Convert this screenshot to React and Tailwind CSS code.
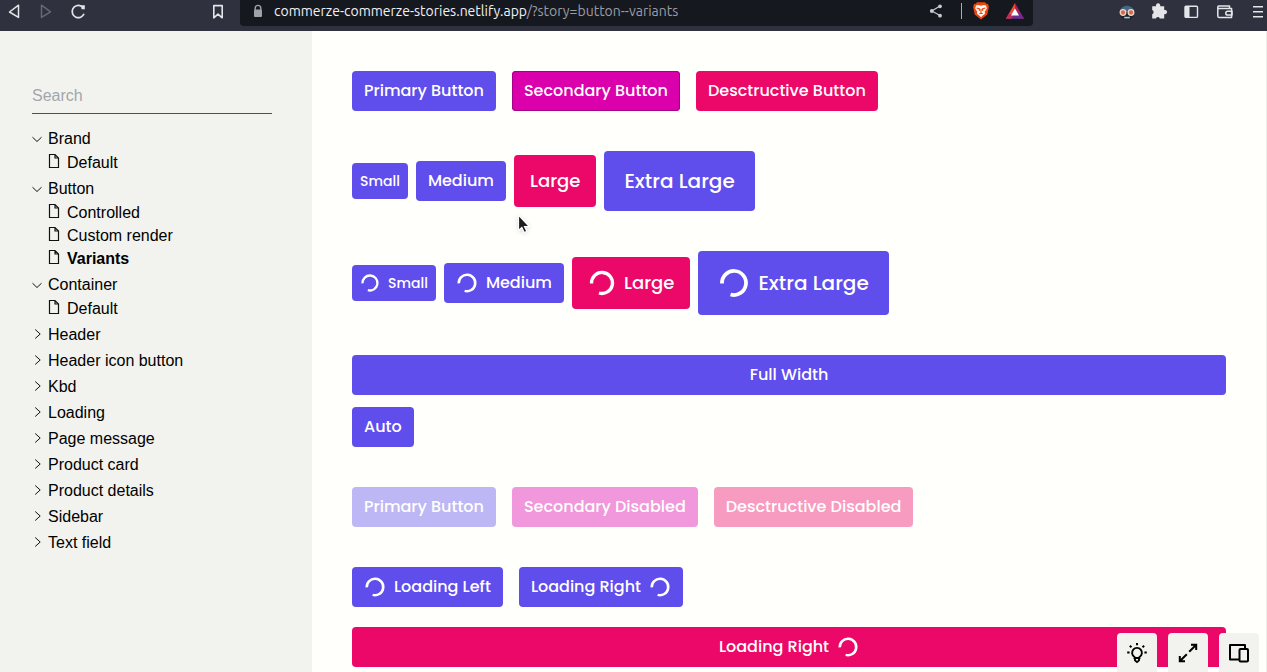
import { clsx } from 'clsx';

const tree = [
  { name: 'Brand', stories: ['Default'] },
  { name: 'Button', stories: ['Controlled', 'Custom render', 'Variants'] },
  { name: 'Container', stories: ['Default'] },
  { name: 'Header' },
  { name: 'Header icon button' },
  { name: 'Kbd' },
  { name: 'Loading' },
  { name: 'Page message' },
  { name: 'Product card' },
  { name: 'Product details' },
  { name: 'Sidebar' },
  { name: 'Text field' },
];

const tones = {
  primary: 'bg-[#5f4dec]',
  secondary: 'bg-[#da00ab]',
  destructive: 'bg-[#ec0868]',
};

const sizes = {
  sm: 'h-9 px-2 text-sm',
  md: 'h-10 px-3 text-base',
  lg: 'h-13 px-4 text-lg',
  xl: 'h-15 px-5 text-xl',
};

const spinnerSizes = { sm: 'size-5', md: 'size-[22px]', lg: 'size-7', xl: 'size-8' };

function Spinner({ size }) {
  return (
    <svg viewBox="0 0 24 24" className={clsx('shrink-0', spinnerSizes[size])} fill="none" stroke="currentColor" strokeWidth="2.8" aria-hidden="true">
      <path d="M3 12.4A9 9 0 1 1 9.4 20.6" />
    </svg>
  );
}

function Button({ tone = 'primary', size = 'md', loading, full, className, children, ...rest }) {
  return (
    <button
      type="button"
      className={clsx(
        'flex items-center justify-center gap-2 rounded font-medium whitespace-nowrap text-white disabled:opacity-40',
        tones[tone],
        sizes[size],
        full && 'w-full',
        className,
      )}
      {...rest}
    >
      {loading === 'left' && <Spinner size={size} />}
      {children}
      {loading === 'right' && <Spinner size={size} />}
    </button>
  );
}

function IconButton({ label, className, children }) {
  return (
    <button type="button" aria-label={label} className={clsx('flex items-center justify-center', className)}>
      {children}
    </button>
  );
}

function BrowserBar() {
  return (
    <header className="flex h-[31px] shrink-0 items-start bg-[#2f313e] text-[#e4e5e8]">
      <nav className="flex h-[21px] w-60 shrink-0 items-center pl-1">
        <IconButton label="Back" className="size-5">
          <svg viewBox="0 0 20 20" className="size-5" fill="none" stroke="currentColor" strokeWidth="1.5" strokeLinejoin="round"><path d="M14.5 4.2v12.2L5.5 11l9-6.8Z" /></svg>
        </IconButton>
        <IconButton label="Forward" className="ml-3 size-5 text-[#666874]">
          <svg viewBox="0 0 20 20" className="size-5" fill="none" stroke="currentColor" strokeWidth="1.5" strokeLinejoin="round"><path d="M5.5 4.2v12.2l9-5.6-9-6.6Z" /></svg>
        </IconButton>
        <IconButton label="Reload" className="ml-3 size-5">
          <svg viewBox="0 0 20 20" className="size-5" fill="none" stroke="currentColor" strokeWidth="1.7"><path d="M13.2 5.2a6.1 6.1 0 1 0 2.8 7.5" /><path d="M12.8 4.2h4v4h-3.2Z" fill="currentColor" stroke="none" /></svg>
        </IconButton>
        <IconButton label="Bookmark" className="mr-3 ml-auto size-5">
          <svg viewBox="0 0 20 20" className="size-5" fill="none" stroke="currentColor" strokeWidth="1.6" strokeLinejoin="round"><path d="M5.8 4.6h8.4v12.2L10 13.2l-4.2 3.6V4.6Z" /></svg>
        </IconButton>
      </nav>
      <div className="flex h-[26px] min-w-0 flex-1 items-center rounded-b bg-[#16181f] pr-2 pb-1 pl-3">
        <svg viewBox="0 0 12 16" className="h-4 w-3 shrink-0 text-[#a0a2a8]" fill="currentColor" aria-hidden="true">
          <path d="M3.2 7V5.2a2.8 2.8 0 0 1 5.6 0V7" fill="none" stroke="currentColor" strokeWidth="1.4" />
          <rect x="2" y="6.5" width="8" height="7.5" rx="1" />
        </svg>
        <p className="ml-2.5 truncate font-['Ubuntu','Noto_Sans',sans-serif] text-sm text-[#9b9da4]">
          <span className="text-[#f1f1f3]">commerze-commerze-stories.netlify.app</span>/?story=button--variants
        </p>
        <IconButton label="Share" className="ml-auto size-5 text-[#c9cacf]">
          <svg viewBox="0 0 20 20" className="size-5" fill="currentColor"><path d="M15 5.1 6.8 10l8.2 4.6" fill="none" stroke="currentColor" strokeWidth="1.2" /><circle cx="15" cy="5.3" r="1.9" /><circle cx="6.8" cy="10" r="1.9" /><circle cx="15" cy="14.7" r="1.9" /></svg>
        </IconButton>
        <span className="ml-4 h-4 w-px bg-[#aaabb1]" />
        <IconButton label="Shields" className="ml-[9px] size-5">
          <svg viewBox="0 0 20 20" className="size-5"><path d="M6 1.2h8l1.3 1.5 1.7.3.9 3-1.6 7.4L10 18.6l-6.3-5.2L2.1 6l.9-3 1.7-.3L6 1.2Z" fill="#e9460f" /><path d="M5 4.5 7.2 4l2.8.7 2.8-.7 2.2.5.9 3-2.2 3.3.4 1.9-2.1 1.6-2 2-2-2-2.1-1.6.4-1.9-2.2-3.3.9-3Z" fill="#fff4ef" /><path d="m5.6 7 3 .9-.4 2M14.4 7l-3 .9.4 2M10 8v4.2m-1.7.3h3.4" stroke="#e9460f" strokeWidth="1.1" fill="none" /></svg>
        </IconButton>
        <IconButton label="Rewards" className="ml-3.5 size-5">
          <svg viewBox="0 0 20 20" className="size-5"><path d="M10 2 .9 17.8h5L10 10.5Z" fill="#f04b2c" /><path d="m10 2 9.1 15.8h-5L10 10.5Z" fill="#9d2267" /><path d="M.9 17.8h18.2l-3-4.5H3.6Z" fill="#682e92" /><path d="m.9 17.8 2.7-4.5h5l-2 4.5Z" fill="#c22b53" /><path d="m10 7.5 4 7H6Z" fill="#fff" /></svg>
        </IconButton>
      </div>
      <div className="flex h-[21px] w-[234px] shrink-0 items-center justify-end gap-3 pr-1">
        <IconButton label="Profile extension" className="size-5">
          <svg viewBox="0 0 20 20" className="size-5"><path d="M3.2 11C3 2.6 17 2.6 16.8 11Z" fill="#416a82" /><path d="M3.5 11h13v4.5l-3 2.7h-7l-3-2.7Z" fill="#1c232d" /><circle cx="6" cy="11.5" r="2.8" fill="#d96957" stroke="#f1d6c4" strokeWidth="1.3" /><circle cx="14" cy="11.5" r="2.8" fill="#d96957" stroke="#f1d6c4" strokeWidth="1.3" /><path d="M7.2 16.6h5.6" stroke="#a9cbdc" strokeWidth="1.6" /></svg>
        </IconButton>
        <IconButton label="Extensions" className="size-5">
          <svg viewBox="0 0 20 20" className="size-5" fill="currentColor"><path d="M3.2 5.2H7a2.2 2.2 0 1 1 4.2 0h4V9a2.2 2.2 0 1 1 0 4.2v4.2h-4.4a2 2 0 0 0-3.8 0H3.2v-4.2a2.2 2.2 0 0 0 0-4.1Z" /></svg>
        </IconButton>
        <IconButton label="Side panel" className="size-5">
          <svg viewBox="0 0 20 20" className="size-5"><rect x="4" y="5.2" width="12.5" height="11.2" rx="1" fill="none" stroke="currentColor" strokeWidth="1.4" /><path d="M4 5.2h4.5v11.2H4Z" fill="currentColor" /></svg>
        </IconButton>
        <IconButton label="Wallet" className="ml-0.5 size-5">
          <svg viewBox="0 0 20 20" className="size-5" fill="none" stroke="currentColor" strokeWidth="1.5" strokeLinejoin="round"><path d="M14.5 7.5V5H3.6C2.5 5 2.5 7.6 3.6 7.6h13v9H4.4c-1.2 0-1.6-.6-1.6-1.6V6.2" /><path d="M17 10.3h-4.3a1.9 1.9 0 0 0 0 3.8H17Z" /></svg>
        </IconButton>
        <IconButton label="Menu" className="ml-1 h-5 w-3">
          <svg viewBox="0 0 12 20" className="h-5 w-3" stroke="currentColor" strokeWidth="1.4"><path d="M2 5.7h10M2 10.7h10M2 15.7h10" /></svg>
        </IconButton>
      </div>
    </header>
  );
}

function Chevron({ open }) {
  return (
    <svg viewBox="0 0 10 10" className={clsx('mr-1.5 size-2.5 shrink-0', !open && 'mb-0.5')} fill="none" stroke="#111" strokeWidth="1" aria-hidden="true">
      <path d={open ? 'M0.5 3.2 5 7.5 9.5 3.2' : 'M3.2 0.5 8.2 5 3.2 9.5'} />
    </svg>
  );
}

function Sidebar() {
  return (
    <aside className="w-78 shrink-0 bg-[#f2f3ef] pt-12 pr-10 pl-8 font-['Liberation_Sans',Arial,sans-serif] text-base text-black">
      <input
        type="search"
        aria-label="Search"
        placeholder="Search"
        className="h-[35px] w-full border-b border-[#50514c] bg-transparent outline-none placeholder:text-[#a3a6ab]"
      />
      <ul className="mt-3">
        {tree.map(({ name, stories }) => (
          <li key={name}>
            <a href={`#${name}`} className="flex h-[26px] items-center">
              <Chevron open={Boolean(stories)} />
              {name}
            </a>
            {stories && (
              <ul className="-mt-px pb-0.5 pl-4">
                {stories.map((story) => (
                  <li key={story}>
                    <a href={`#${name}-${story}`} className={clsx('flex h-[23px] items-center', story === 'Variants' && 'font-bold')}>
                      <svg viewBox="0 0 12 16" className="mr-[7px] mb-1 h-4 w-3 shrink-0" fill="none" stroke="#111" strokeWidth="1.2" aria-hidden="true">
                        <path d="M1.5 1.5h5.5l3.5 3.5v9.5h-9Zm5.5 0v3.5h3.5" />
                      </svg>
                      {story}
                    </a>
                  </li>
                ))}
              </ul>
            )}
          </li>
        ))}
      </ul>
    </aside>
  );
}

const toolClass = 'flex h-[39px] w-10 items-center justify-center rounded-t bg-[#f2f3ef] text-black';

function Toolbar() {
  return (
    <div className="fixed right-2 bottom-0 flex gap-[11px]">
      <button type="button" aria-label="Toggle theme" className={toolClass}>
        <svg viewBox="0 0 24 24" className="size-6" fill="none" stroke="currentColor" strokeWidth="1.9">
          <path d="M9.5 17v-1a4.9 4.9 0 1 1 5 0v1ZM10 17v2.4l2 1.6 2-1.6V17M12 2v2.2M2.2 11.5h2.4m14.8 0h2.4M4.8 4.7l1.7 1.6m12.7-1.6-1.7 1.6" />
        </svg>
      </button>
      <button type="button" aria-label="Full screen" className={toolClass}>
        <svg viewBox="0 0 24 24" className="size-6" fill="none" stroke="currentColor" strokeWidth="2">
          <path d="M15 3.8h5.2V9M20 4l-6.8 6.8M9 20.2H3.8V15M4 20l6.8-6.8" />
        </svg>
      </button>
      <button type="button" aria-label="Change width" className={toolClass}>
        <svg viewBox="0 0 24 24" className="size-6" fill="none" stroke="currentColor" strokeWidth="2" strokeLinejoin="round">
          <path d="M12 18.5H3V4h15v4" />
          <rect x="12.5" y="8" width="8.5" height="12.5" rx="1" />
        </svg>
      </button>
    </div>
  );
}

export default function App() {
  return (
    <div className="flex h-screen flex-col overflow-hidden bg-[#fffffc]">
      <BrowserBar />
      <div className="flex min-h-0 flex-1">
        <Sidebar />
        <main className="flex min-w-0 flex-1 flex-col overflow-hidden border-r border-[#ecece8] px-10 pt-10 font-['Poppins','Inter',sans-serif]">
          <section className="flex gap-4">
            <Button>Primary Button</Button>
            <Button tone="secondary" className="inset-ring inset-ring-[#a80088]">Secondary Button</Button>
            <Button tone="destructive">Desctructive Button</Button>
          </section>
          <section className="mt-10 flex items-center gap-2">
            <Button size="sm">Small</Button>
            <Button>Medium</Button>
            <Button size="lg" tone="destructive">Large</Button>
            <Button size="xl">Extra Large</Button>
          </section>
          <section className="mt-10 flex items-center gap-2">
            <Button size="sm" loading="left">Small</Button>
            <Button loading="left">Medium</Button>
            <Button size="lg" tone="destructive" loading="left">Large</Button>
            <Button size="xl" loading="left" className="h-16">Extra Large</Button>
          </section>
          <section className="mt-10 flex flex-col items-start gap-3">
            <Button full>Full Width</Button>
            <Button>Auto</Button>
          </section>
          <section className="mt-10 flex gap-4">
            <Button disabled>Primary Button</Button>
            <Button disabled tone="secondary">Secondary Disabled</Button>
            <Button disabled tone="destructive">Desctructive Disabled</Button>
          </section>
          <section className="mt-10 flex gap-4">
            <Button loading="left">Loading Left</Button>
            <Button loading="right">Loading Right</Button>
          </section>
          <section className="mt-5">
            <Button full tone="destructive" loading="right">Loading Right</Button>
          </section>
        </main>
      </div>
      <Toolbar />
      <svg viewBox="0 0 16 22" className="pointer-events-none fixed top-[213px] left-[516px] h-[22px] w-4 drop-shadow-sm" aria-hidden="true">
        <path d="M2.5 2v15.5l3.3-3 2.4 5 2.6-1.2-2.3-4.8h4.8Z" fill="#1d1d1d" stroke="#fff" strokeWidth="1.2" />
      </svg>
    </div>
  );
}
